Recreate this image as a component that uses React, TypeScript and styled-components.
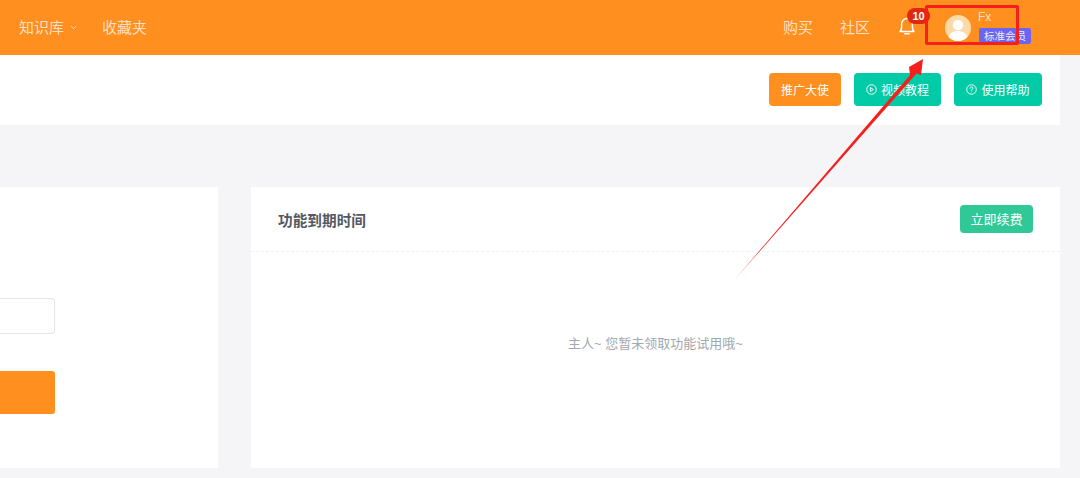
import React from 'react';
import styled, { createGlobalStyle } from 'styled-components';
import { ChevronDown } from 'lucide-react';

const GlobalStyle = createGlobalStyle`
  html, body {
    margin: 0;
    padding: 0;
    background: #f5f5f8;
    font-family: "Liberation Sans", "Noto Sans CJK SC", sans-serif;
    overflow: hidden;
  }
`;

const Page = styled.div`
  position: relative;
  width: 1080px;
  height: 478px;
  overflow: hidden;
`;

const Header = styled.header`
  height: 55px;
  background: #ff8f1f;
  display: flex;
  align-items: center;
  padding-left: 19px;
`;

const NavLink = styled.span<{ $gap?: number }>`
  display: inline-flex;
  align-items: center;
  margin-right: ${(p) => p.$gap ?? 0}px;
  margin-top: -3px;
  font-size: 15px;
  color: rgba(255, 255, 255, 0.72);
  white-space: nowrap;
`;

const Spacer = styled.div`
  flex: 1;
`;

const Caret = styled(ChevronDown)`
  width: 9px;
  height: 9px;
  margin-left: 5px;
  margin-top: 3px;
`;

const BellWrap = styled.div`
  position: relative;
  width: 18px;
  height: 20px;
  margin-right: 29px;
  margin-top: -3px;
  color: #fff;
`;

const Badge = styled.span`
  position: absolute;
  left: 9px;
  top: -8px;
  width: 23px;
  height: 16px;
  border-radius: 8px;
  background: #e0280e;
  color: #fff;
  font-size: 11px;
  font-weight: 700;
  line-height: 16px;
  text-align: center;
`;

const User = styled.div`
  display: flex;
  align-items: center;
  gap: 7px;
  width: 135px;
  height: 38px;
`;

const Avatar = styled.svg`
  width: 26px;
  height: 26px;
  display: block;
  flex: none;
`;

const UserInfo = styled.div`
  display: flex;
  flex-direction: column;
  align-items: flex-start;
  margin-top: -1px;
`;

const UserName = styled.span`
  font-size: 12px;
  line-height: 14px;
  color: rgba(255, 255, 255, 0.72);
`;

const Level = styled.span`
  margin-top: 4px;
  margin-left: 1px;
  padding: 0 5px;
  height: 16px;
  border-radius: 2px;
  background: #6b66f2;
  color: rgba(255, 255, 255, 0.9);
  font-size: 10.5px;
  line-height: 16px;
  white-space: nowrap;
`;

const Toolbar = styled.div`
  width: 1060px;
  height: 70px;
  box-sizing: border-box;
  background: #fff;
  display: flex;
  align-items: center;
  justify-content: flex-end;
  gap: 13px;
  padding: 0 18px 2px 0;
`;

const ToolButton = styled.button<{ $bg: string; $w: number }>`
  width: ${(p) => p.$w}px;
  height: 33px;
  border: 0;
  border-radius: 4px;
  background: ${(p) => p.$bg};
  color: #fff;
  font: inherit;
  font-size: 12px;
  display: flex;
  align-items: center;
  justify-content: center;
  gap: 4px;
  padding: 0;
`;

const Content = styled.main`
  display: grid;
  grid-template-columns: 218px 809px;
  column-gap: 33px;
  margin-top: 62px;
  height: 281px;
`;

const LeftCard = styled.section`
  background: #fff;
  box-sizing: border-box;
  padding: 111px 163px 0 0;
`;

const InputBox = styled.div`
  height: 36px;
  box-sizing: border-box;
  border: 1px solid #e4e4ea;
  border-left: 0;
  border-radius: 0 4px 4px 0;
  background: #fff;
`;

const SubmitBar = styled.div`
  height: 43px;
  margin-top: 37px;
  border-radius: 0 3px 3px 0;
  background: #ff8f1f;
`;

const RightCard = styled.section`
  background: #fff;
  display: flex;
  flex-direction: column;
`;

const CardHead = styled.div`
  height: 65px;
  box-sizing: border-box;
  border-bottom: 1px dashed #f1f1f4;
  display: flex;
  align-items: center;
  justify-content: space-between;
  padding: 0 27px;
`;

const CardTitle = styled.h3`
  margin: 0;
  font-size: 14.67px;
  font-weight: 700;
  color: #54595f;
`;

const RenewButton = styled.button`
  width: 73px;
  height: 28px;
  margin-top: -1px;
  border: 0;
  border-radius: 4px;
  background: #2fc896;
  color: #fff;
  font: inherit;
  font-size: 13px;
  padding: 0;
`;

const Empty = styled.div`
  flex: 1;
  display: flex;
  justify-content: center;
  padding-top: 83px;
  font-size: 13px;
  line-height: 17px;
  color: #a3a7ae;
`;

const HighlightBox = styled.div`
  position: absolute;
  left: 925px;
  top: 5px;
  width: 94px;
  height: 40px;
  box-sizing: border-box;
  border: 3px solid #f5201e;
  border-radius: 2px;
`;

const Arrow = styled.svg`
  position: absolute;
  left: 720px;
  top: 50px;
  width: 220px;
  height: 245px;
`;

const Bell = () => (
  <svg width="18" height="20" viewBox="0 0 18 20" fill="none" stroke="currentColor" strokeWidth="1.5" strokeLinejoin="round">
    <path d="M2 15.5c1.3-1.2 1.600-2.600 1.600-4.600V8.200C3.600 5 6 2.600 9 2.600s5.400 2.400 5.400 5.600v2.700c0 2 .3 3.400 1.600 4.600H2z" />
    <path d="M6.800 17.800h4.400" strokeLinecap="round" />
  </svg>
);

const PlayCircle = () => (
  <svg width="11" height="11" viewBox="0 0 12 12" fill="none" stroke="currentColor" strokeWidth="1">
    <circle cx="6" cy="6" r="5.200" />
    <path d="M4.800 3.800L8 6 4.800 8.200z" strokeLinejoin="round" />
  </svg>
);

const HelpCircle = () => (
  <svg width="11" height="11" viewBox="0 0 12 12" fill="none" stroke="currentColor" strokeWidth="1">
    <circle cx="6" cy="6" r="5.200" />
    <path d="M4.400 4.800c0-1 .7-1.600 1.600-1.600s1.600.6 1.600 1.400c0 1.200-1.600 1.200-1.600 2.400" strokeLinecap="round" />
    <path d="M6 8.400v.7" />
  </svg>
);

export default function App(): JSX.Element {
  return (
    <Page>
      <GlobalStyle />
      <Header>
        <NavLink $gap={24}>
          知识库
          <Caret strokeWidth={2.5} />
        </NavLink>
        <NavLink>收藏夹</NavLink>
        <Spacer />
        <NavLink $gap={27}>购买</NavLink>
        <NavLink $gap={28}>社区</NavLink>
        <BellWrap>
          <Bell />
          <Badge>10</Badge>
        </BellWrap>
        <User>
          <Avatar viewBox="0 0 26 26">
            <circle cx="13" cy="13" r="13" fill="#ffd9a8" />
            <circle cx="13" cy="10" r="5.200" fill="#fff" />
            <path d="M3.600 22c1-4 5-6 9.400-6s8.400 2 9.400 6a13 13 0 0 1-18.800 0z" fill="#fff" />
          </Avatar>
          <UserInfo>
            <UserName>Fx</UserName>
            <Level>标准会员</Level>
          </UserInfo>
        </User>
      </Header>
      <Toolbar>
        <ToolButton $bg="#ff8f1f" $w={72}>推广大使</ToolButton>
        <ToolButton $bg="#00cba6" $w={87}>
          <PlayCircle />
          视频教程
        </ToolButton>
        <ToolButton $bg="#00cba6" $w={88}>
          <HelpCircle />
          使用帮助
        </ToolButton>
      </Toolbar>
      <Content>
        <LeftCard>
          <InputBox />
          <SubmitBar />
        </LeftCard>
        <RightCard>
          <CardHead>
            <CardTitle>功能到期时间</CardTitle>
            <RenewButton>立即续费</RenewButton>
          </CardHead>
          <Empty>主人~ 您暂未领取功能试用哦~</Empty>
        </RightCard>
      </Content>
      <HighlightBox />
      <Arrow viewBox="0 0 220 245">
        <defs>
          <linearGradient id="arrowFade" gradientUnits="userSpaceOnUse" x1="10" y1="235" x2="40" y2="200">
            <stop offset="0" stopColor="#f5201e" stopOpacity="0.2" />
            <stop offset="1" stopColor="#f5201e" />
          </linearGradient>
        </defs>
        <path d="M10 235L190 25 189 17 203 9 201 25 196.500 23.500 10 235z" fill="url(#arrowFade)" />
      </Arrow>
    </Page>
  );
}
